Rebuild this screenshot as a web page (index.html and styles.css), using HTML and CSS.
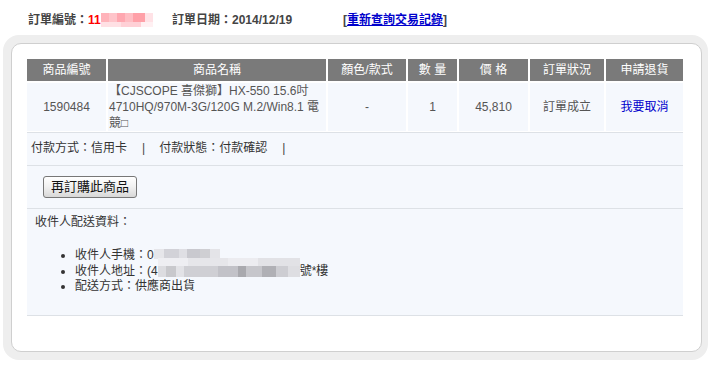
FILE: index.html
```html
<!DOCTYPE html>
<html lang="zh-Hant">
<head>
<meta charset="utf-8">
<title>訂單明細</title>
<link rel="stylesheet" href="styles.css">
</head>
<body>
<div class="top">
  <div class="top-item top-no">訂單編號：<span class="red">11</span><span class="mosaic-pink"></span></div>
  <div class="top-item top-date">訂單日期：2014/12/19</div>
  <div class="top-item top-link">[<a href="#">重新查詢交易記錄</a>]</div>
</div>
<div class="box">
  <div class="inner">
    <table class="items">
      <colgroup>
        <col class="c1"><col class="c2"><col class="c3"><col class="c4"><col class="c5"><col class="c6"><col class="c7">
      </colgroup>
      <thead>
        <tr>
          <th>商品編號</th><th>商品名稱</th><th>顏色/款式</th><th>數 量</th><th>價 格</th><th>訂單狀況</th><th>申請退貨</th>
        </tr>
      </thead>
      <tbody>
        <tr>
          <td>1590484</td>
          <td class="name">【CJSCOPE 喜傑獅】HX-550 15.6吋4710HQ/970M-3G/120G M.2/Win8.1 電競□</td>
          <td>-</td>
          <td>1</td>
          <td>45,810</td>
          <td>訂單成立</td>
          <td><a class="cancel" href="#">我要取消</a></td>
        </tr>
      </tbody>
    </table>
    <div class="pay">付款方式：信用卡<span class="sep">|</span>付款狀態：付款確認<span class="sep">|</span></div>
    <div class="btnrow"><button class="rebuy" type="button">再訂購此商品</button></div>
    <div class="ship">
      <div class="ship-title">收件人配送資料：</div>
      <ul class="ship-list">
        <li>收件人手機：0<span class="mosaic-phone"></span></li>
        <li>收件人地址：(4<span class="mosaic-addr"></span>號*樓</li>
        <li>配送方式：供應商出貨</li>
      </ul>
    </div>
  </div>
</div>
</body>
</html>
```

FILE: styles.css
```css
* { box-sizing: border-box; }

body {
  margin: 0;
  background: #fff;
  font-family: "Liberation Sans", "Noto Sans CJK TC", sans-serif;
  font-size: 12px;
  color: #333;
}

.top {
  display: flex;
  padding: 13px 0 0 28px;
  height: 35px;
  line-height: 15px;
  font-weight: bold;
  color: #444;
}

.top-no { width: 144px; white-space: nowrap; }
.top-date { width: 171px; }
.top-link { color: #444; }
.top-link a { color: #0000cc; text-decoration: underline; }

.red { color: #ff0000; }

.mosaic-pink {
  display: inline-block;
  width: 52px;
  height: 14px;
  vertical-align: -3px;
  background:
    linear-gradient(to right, #ffb3ba 0 8px, #ffc4ca 8px 16px, #ffa7b0 16px 24px, #ffbdc3 24px 32px, #ffa0a8 32px 44px, #ffe2e6 44px 52px) top / 100% 9px no-repeat,
    linear-gradient(to right, #ffe0e4 0 20px, #ffd0d6 20px 40px, #fff0f2 40px 52px) bottom / 100% 5px no-repeat;
}

.box {
  margin: 0 6px 0 3px;
  border: 8px solid #eeeeee;
  border-right-width: 6px;
  border-radius: 16px;
  background: #eeeeee;
}

.inner {
  background: #fff;
  border: 1px solid #cfcfcf;
  border-radius: 10px;
  padding: 15px 18px 35px 15px;
}

.items {
  width: 656px;
  table-layout: fixed;
  border-collapse: separate;
  border-spacing: 0;
}

.c1 { width: 81px; }
.c2 { width: 220px; }
.c3 { width: 80px; }
.c4 { width: 51px; }
.c5 { width: 71px; }
.c6 { width: 76px; }
.c7 { width: 77px; }

.items th {
  background: #7a7a7a;
  color: #fff;
  font-weight: normal;
  height: 24px;
  padding: 0;
  line-height: 22px;
  text-align: center;
  border-right: 2px solid #fff;
  border-bottom: 2px solid #fff;
}

.items td {
  background: #f5f8fd;
  color: #555;
  height: 49px;
  padding: 0;
  text-align: center;
  vertical-align: middle;
  line-height: 16px;
  border-right: 2px solid #fff;
  border-bottom: 1px solid #fff;
}

.items th:last-child,
.items td:last-child { border-right: none; }

.items td.name {
  text-align: left;
  padding: 0 3px 0 1px;
}

.cancel { color: #0000cc; text-decoration: none; }

.pay {
  background: #f5f8fd;
  border-top: 1px solid #dde1e6;
  height: 33px;
  line-height: 31px;
  padding-left: 4px;
  color: #333;
}

.sep { margin: 0 14px 0 15px; color: #444; }

.btnrow {
  background: #f5f8fd;
  border-top: 1px solid #dde1e6;
  height: 43px;
  padding: 10px 0 0 16px;
}

.rebuy {
  height: 22px;
  padding: 0 7px;
  font-family: "Liberation Sans", "Noto Sans CJK TC", sans-serif;
  font-size: 13px;
  line-height: 20px;
  color: #111;
  border: 1px solid #777;
  border-radius: 3px;
  background: linear-gradient(#ffffff, #f0f0f0 50%, #d8d8d8);
}

.ship {
  background: #f5f8fd;
  border-top: 1px solid #dde1e6;
  border-bottom: 1px solid #dde1e6;
  height: 108px;
  padding: 5px 0 0 8px;
  color: #333;
}

.ship-title { line-height: 16px; }

.ship-list {
  margin: 18px 0 0 0;
  padding-left: 40px;
  line-height: 15.5px;
}

.mosaic-phone {
  display: inline-block;
  width: 66px;
  height: 10px;
  vertical-align: 0;
  background: linear-gradient(to right, #e6e6ea 0 10px, #d2d2d8 10px 25px, #dfdfe4 25px 33px, #c9c9cf 33px 46px, #cfcfd3 46px 56px, #e4e4e8 56px 66px);
}

.mosaic-addr {
  position: relative;
  display: inline-block;
  width: 142px;
  height: 11px;
  vertical-align: -2px;
  background: linear-gradient(to right, #dcdce0 0 8px, #c8c8cc 8px 18px, #e2e2e6 18px 26px, #cfcfd4 26px 60px, #c2c2c8 60px 80px, #a9a9ae 80px 88px, #c6c6cb 88px 104px, #b0b0b5 104px 118px, #cdcdd2 118px 130px, #dedee2 130px 142px);
}

.mosaic-addr::before {
  content: "";
  position: absolute;
  left: 0;
  top: -8px;
  width: 142px;
  height: 8px;
  background: linear-gradient(to right, #eeeef2 0 30px, #e6e6ea 30px 70px, #ececf0 70px 100px, #e2e2e6 100px 142px);
}
```
